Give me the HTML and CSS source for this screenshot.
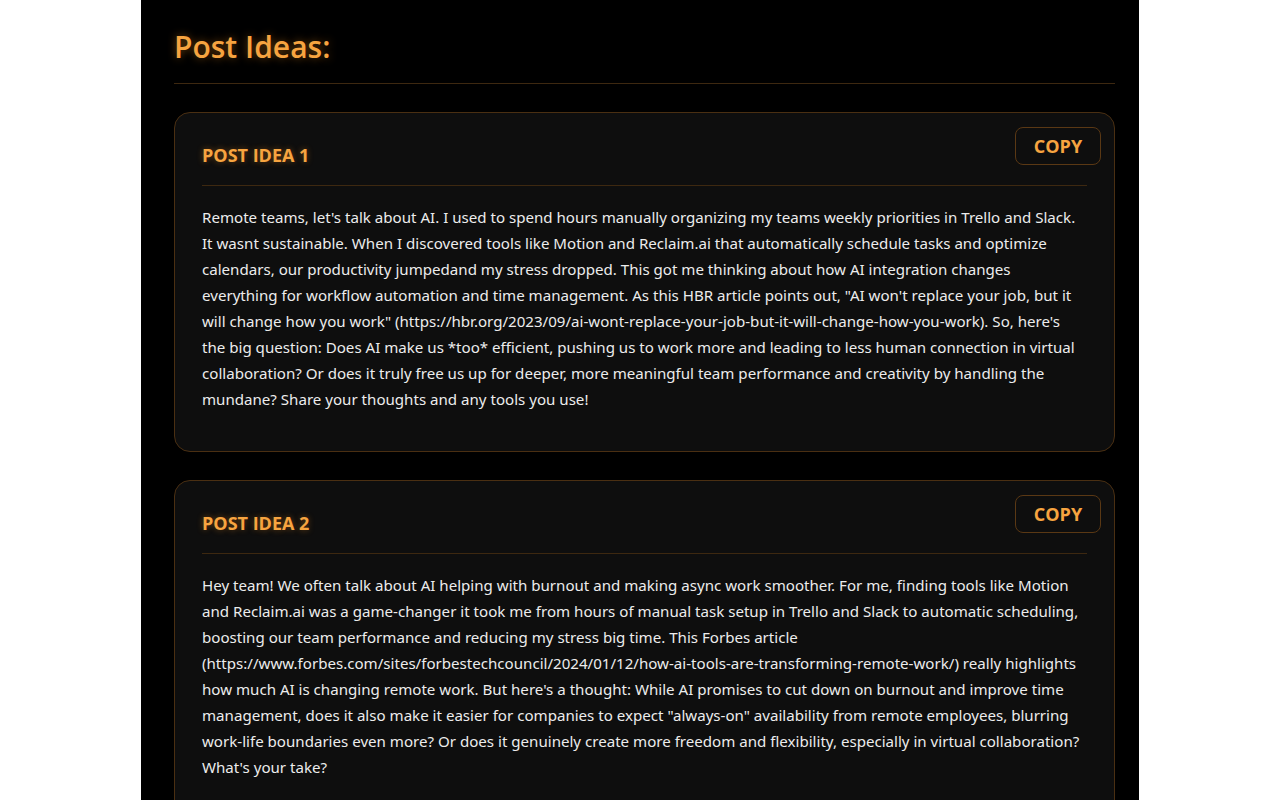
FILE: index.html
```html
<!DOCTYPE html>
<html lang="en">
<head>
<meta charset="utf-8">
<title>Post Ideas</title>
<link rel="stylesheet" href="styles.css">
</head>
<body>
<main class="panel">
  <h1 class="page-title">Post Ideas:</h1>
  <section class="card">
    <div class="card-head">
      <h2 class="card-title">POST IDEA 1</h2>
    </div>
    <button class="copy-btn">COPY</button>
    <p class="card-body">Remote teams, let's talk about AI. I used to spend hours manually organizing my teams weekly priorities in Trello and Slack. It wasnt sustainable. When I discovered tools like Motion and Reclaim.ai that automatically schedule tasks and optimize calendars, our productivity jumpedand my stress dropped. This got me thinking about how AI integration changes everything for workflow automation and time management. As this HBR article points out, "AI won't replace your job, but it will change how you work" (https://hbr.org/2023/09/ai-wont-replace-your-job-but-it-will-change-how-you-work). So, here's the big question: Does AI make us *too* efficient, pushing us to work more and leading to less human connection in virtual collaboration? Or does it truly free us up for deeper, more meaningful team performance and creativity by handling the mundane? Share your thoughts and any tools you use!</p>
  </section>
  <section class="card">
    <div class="card-head">
      <h2 class="card-title">POST IDEA 2</h2>
    </div>
    <button class="copy-btn">COPY</button>
    <p class="card-body">Hey team! We often talk about AI helping with burnout and making async work smoother. For me, finding tools like Motion and Reclaim.ai was a game-changer it took me from hours of manual task setup in Trello and Slack to automatic scheduling, boosting our team performance and reducing my stress big time. This Forbes article (https://www.forbes.com/sites/forbestechcouncil/2024/01/12/how-ai-tools-are-transforming-remote-work/) really highlights how much AI is changing remote work. But here's a thought: While AI promises to cut down on burnout and improve time management, does it also make it easier for companies to expect "always-on" availability from remote employees, blurring work-life boundaries even more? Or does it genuinely create more freedom and flexibility, especially in virtual collaboration? What's your take?</p>
  </section>
</main>
</body>
</html>
```

FILE: styles.css
```css
* { box-sizing: border-box; }
html, body {
  margin: 0;
  padding: 0;
  background: #ffffff;
}
body {
  font-family: "Noto Sans", "Open Sans", sans-serif;
  height: 800px;
  overflow: hidden;
}
.panel {
  width: 998px;
  margin: 0 0 0 141px;
  background: #000000;
  min-height: 800px;
  padding: 25px 24px 40px 33px;
}
.page-title {
  margin: 0 0 28px;
  padding-bottom: 14px;
  border-bottom: 1px solid #3d2810;
  font-family: "Open Sans", "Noto Sans", sans-serif;
  font-size: 30px;
  line-height: 44px;
  font-weight: 600;
  color: #f7a440;
  text-shadow: 0 0 8px rgba(255, 150, 30, 0.45);
}
.card {
  position: relative;
  background: #0e0e0e;
  border: 1px solid #4a2f12;
  border-radius: 16px;
  padding: 28px 27px 28px;
  margin-bottom: 28px;
}
.card-head {
  padding-bottom: 16px;
  border-bottom: 1px solid #3d2810;
  margin-bottom: 18px;
}
.card-title {
  margin: 0;
  font-family: "Open Sans", "Noto Sans", sans-serif;
  font-size: 18px;
  line-height: 28px;
  font-weight: 700;
  color: #f7a440;
  text-shadow: 0 0 6px rgba(255, 150, 30, 0.4);
}
.copy-btn {
  position: absolute;
  top: 14px;
  right: 13px;
  width: 86px;
  height: 38px;
  padding: 0;
  background: #0e0e0e;
  border: 1px solid #5a3814;
  border-radius: 8px;
  color: #f7a440;
  font-family: "Open Sans", "Noto Sans", sans-serif;
  font-size: 18px;
  font-weight: 700;
  cursor: pointer;
}
.card-body {
  margin: 0 0 11px;
  font-size: 15.1px;
  line-height: 26px;
  color: #ececec;
}
```
